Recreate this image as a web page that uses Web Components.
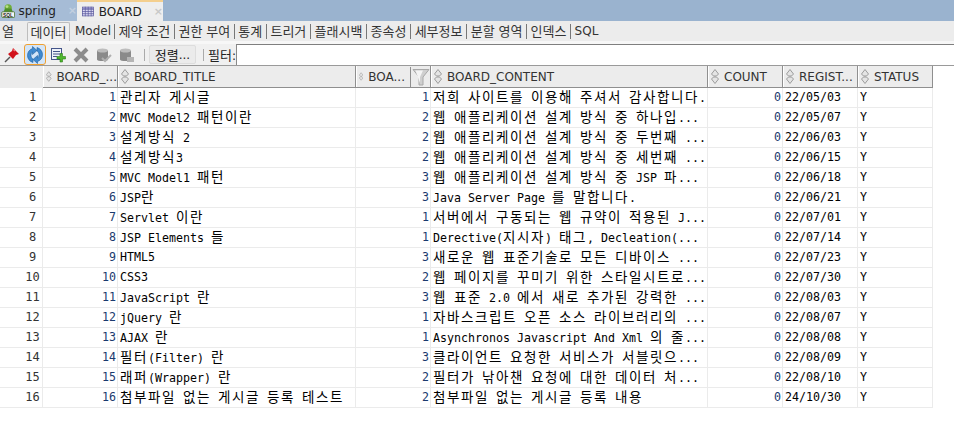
<!DOCTYPE html>
<html>
<head>
<meta charset="utf-8">
<style>
  html, body { margin: 0; padding: 0; background: #fff; }
  body { width: 954px; height: 422px; overflow: hidden; font-family: "Liberation Sans", "Noto Sans CJK KR", sans-serif; }
</style>
</head>
<body>
<editor-tabs></editor-tabs>
<sub-tabs></sub-tabs>
<data-toolbar></data-toolbar>
<data-grid></data-grid>

<script>
const UI_FONT = '"DejaVu Sans", "Noto Sans CJK KR", sans-serif';

// hangul runs get their own size, the CJK font is narrower than the original
function hangul(s) {
  return s.replace(/[\uac00-\ud7a3]+/g, m => `<span class="h">${m}</span>`);
}

class EditorTabs extends HTMLElement {
  connectedCallback() {
    this.attachShadow({ mode: 'open' });
    this.shadowRoot.innerHTML = `
      <style>
        :host { display: flex; height: 21px; background: #9ab3cf; font: 12px ${UI_FONT}; color: #222; }
        .tab { display: flex; align-items: center; height: 21px; box-sizing: border-box; }
        .spring { width: 77px; padding-left: 1px; background: #a6bcd6; }
        .spring svg { margin-right: 3px; }
        .board { width: 86px; padding-left: 5px; background: #eeeeee; border-top: 2px solid #f4cf8e; }
        .board svg { margin-right: 5px; }
        .x { color: #c3d0e0; font-size: 11px; font-weight: bold; margin-left: 12px; }
        .board .x { color: #c8c8c8; }
      </style>
      <div class="tab spring">
        <svg width="18" height="18" viewBox="0 0 18 18">
          <circle cx="9" cy="5" r="4.500" fill="#6fae3a"/>
          <circle cx="7.500" cy="3.500" r="1.800" fill="#b9e08c"/>
          <path d="M3 11 L5 6 H13 L15 11Z" fill="#4f8f2a"/>
          <rect x="1" y="10" width="16" height="7" rx="1" fill="#f7f7f7" stroke="#3c6b22"/>
          <text x="2.500" y="16" font-size="6" font-weight="bold" font-family="Liberation Sans" fill="#222">SQL</text>
        </svg>
        <span>spring</span><span class="x">×</span>
      </div>
      <div class="tab board">
        <svg width="16" height="13" viewBox="0 0 16 13">
          <rect x="0.500" y="0.500" width="15" height="12" fill="#dcd8f2" stroke="#5b5a9e"/>
          <rect x="1" y="1" width="14" height="2" fill="#8f8cc8"/>
          <path d="M0 3.500H16M0 6.500H16M0 9.500H16M4.500 0V13M8.500 0V13M12.500 0V13" stroke="#5b5a9e" stroke-width="1"/>
        </svg>
        <span>BOARD</span><span class="x">×</span>
      </div>
    `;
  }
}

class SubTabs extends HTMLElement {
  connectedCallback() {
    this.attachShadow({ mode: 'open' });
    const names = ['제약 조건', '권한 부여', '통계', '트리거', '플래시백', '종속성', '세부정보', '분할 영역', '인덱스', 'SQL'];
    this.shadowRoot.innerHTML = `
      <style>
        :host { display: flex; align-items: flex-end; height: 20px; background: #ececec; font: 12px ${UI_FONT}; color: #333; box-sizing: border-box; padding-left: 2px; }
        span.i { height: 19px; line-height: 19px; white-space: nowrap; }
        .h { font-size: 13px; }
        .col { width: 25px; }
        .on { width: 43px; box-sizing: border-box; text-align: center; border: 1px solid #bdbdbd; border-bottom: 0; border-radius: 2px 2px 0 0; background: #f0f0f0; margin-right: 5px; }
        span.t { padding: 0 3.600px; border-left: 1px solid #777; line-height: 15px; height: 15px; margin-bottom: 2px; }
        .m { padding-right: 3px; }
      </style>
      <span class="i col">${hangul('열')}</span><span class="i on">${hangul('데이터')}</span><span class="i m">Model</span>
      ${names.map(n => `<span class="i t">${hangul(n)}</span>`).join('')}
    `;
  }
}

class DataToolbar extends HTMLElement {
  connectedCallback() {
    this.attachShadow({ mode: 'open' });
    this.shadowRoot.innerHTML = `
      <style>
        :host { display: flex; align-items: center; height: 24px; background: #f0f0f0; font: 12px ${UI_FONT}; color: #222; box-sizing: border-box; border-top: 3px solid #f7f7f7; padding-left: 3px; }
        .h { font-size: 13px; }
        svg { flex: none; display: block; }
        .active { width: 22px; height: 21px; box-sizing: border-box; border: 1px solid #f0a030; border-radius: 3px; background: #d3e5f8; display: flex; align-items: center; justify-content: center; margin: 0 4px 0 4px; }
        .ic { margin-right: 7px; }
        .sep { width: 1px; height: 12px; background: #aaa; margin: 0 4px; flex: none; }
        .sep.b { margin: 0 4px 0 7px; }
        .sort { height: 19px; width: 47px; flex: none; display: flex; align-items: center; justify-content: center; background: #ebebeb; border: 1px solid #ddd; border-radius: 2px; box-sizing: border-box; }
        .label { margin-left: 0; white-space: nowrap; }
        input { flex: 1; min-width: 0; height: 21px; box-sizing: border-box; margin: 0; border: 0; border-top: 1px solid #7f7f7f; border-left: 1px solid #8a8a8a; background: #fff; outline: 0; }
      </style>
      <svg width="16" height="16" viewBox="0 0 16 16" style="margin-left:1px">
        <path d="M1 15 L6 10" stroke="#555" stroke-width="1.500"/>
        <path d="M9 1 L15 7 L12 8 L9 12 L4 7 L8 4Z" fill="#d1121b"/>
        <path d="M9.500 2.500 L11 4" stroke="#f08080" stroke-width="1.500"/>
      </svg>
      <div class="active">
        <svg width="18" height="18" viewBox="0 0 18 18" fill="#3f8ad0" stroke="#1f5fa0" stroke-width=".6">
          <path d="M7 16.500C3.500 15.500 1.500 12.500 1.500 9.500C1.500 6 3.500 3.500 6.500 2.500V.5L11 4.500L6.500 8.500V6C5.500 6.500 5 8 5 9.500C5 11 6 12.500 7 13Z"/>
          <path d="M11 1.500C14.500 2.500 16.500 5.500 16.500 8.500C16.500 12 14.500 14.500 11.500 15.500V17.500L7 13.500L11.500 9.500V12C12.500 11.500 13 10 13 8.500C13 7 12 5.500 11 5Z"/>
        </svg>
      </div>
      <svg class="ic" width="16" height="16" viewBox="0 0 16 16">
        <rect x="1.500" y="1.500" width="10" height="11" fill="#eef2fa" stroke="#44558a"/>
        <path d="M3 4.500H10M3 7H10M3 9.500H7" stroke="#44558a"/>
        <path d="M10 6.500V9.500H7V12H10V15H12.500V12H15.500V9.500H12.500V6.500Z" fill="#4fb82e" stroke="#2d7d17" stroke-width=".6"/>
      </svg>
      <svg class="ic" width="16" height="16" viewBox="0 0 16 16">
        <path d="M2 2L14 14M14 2L2 14" stroke="#8c8c8c" stroke-width="4"/>
      </svg>
      <svg class="ic" width="16" height="16" viewBox="0 0 16 16">
        <path d="M1 3.500V12.500C1 14.500 12 14.500 12 12.500V3.500Z" fill="#8a8a8a"/>
        <ellipse cx="6.500" cy="3.500" rx="5.500" ry="2" fill="#bdbdbd"/>
        <path d="M6 11L9 14L15 8" stroke="#b0b0b0" stroke-width="2" fill="none"/>
      </svg>
      <svg class="ic" width="16" height="16" viewBox="0 0 16 16" style="margin-right:5px">
        <path d="M1 3.500V12.500C1 14.500 12 14.500 12 12.500V3.500Z" fill="#8a8a8a"/>
        <ellipse cx="6.500" cy="3.500" rx="5.500" ry="2" fill="#bdbdbd"/>
        <path d="M8 10H15V15H8Z" fill="#b5b5b5"/>
      </svg>
      <div class="sep"></div>
      <div class="sort">${hangul('정렬')}...</div>
      <div class="sep b"></div>
      <span class="label">${hangul('필터')}:</span>
      <input>
    `;
  }
}

const ROWS = [
  [1, '관리자 게시글', 1, '저희 사이트를 이용해 주셔서 감사합니다.', 0, '22/05/03'],
  [2, 'MVC Model2 패턴이란', 2, '웹 애플리케이션 설계 방식 중 하나입...', 0, '22/05/07'],
  [3, '설계방식 2', 2, '웹 애플리케이션 설계 방식 중 두번째 ...', 0, '22/06/03'],
  [4, '설계방식3', 2, '웹 애플리케이션 설계 방식 중 세번째 ...', 0, '22/06/15'],
  [5, 'MVC Model1 패턴', 3, '웹 애플리케이션 설계 방식 중 JSP 파...', 0, '22/06/18'],
  [6, 'JSP란', 3, 'Java Server Page 를 말합니다.', 0, '22/06/21'],
  [7, 'Servlet 이란', 1, '서버에서 구동되는 웹 규약이 적용된 J...', 0, '22/07/01'],
  [8, 'JSP Elements 들', 1, 'Derective(지시자) 태그, Decleation(...', 0, '22/07/14'],
  [9, 'HTML5', 3, '새로운 웹 표준기술로 모든 디바이스 ...', 0, '22/07/23'],
  [10, 'CSS3', 2, '웹 페이지를 꾸미기 위한 스타일시트로...', 0, '22/07/30'],
  [11, 'JavaScript 란', 3, '웹 표준 2.0 에서 새로 추가된 강력한 ...', 0, '22/08/03'],
  [12, 'jQuery 란', 1, '자바스크립트 오픈 소스 라이브러리의 ...', 0, '22/08/07'],
  [13, 'AJAX 란', 1, 'Asynchronos Javascript And Xml 의 줄...', 0, '22/08/08'],
  [14, '필터(Filter) 란', 3, '클라이언트 요청한 서비스가 서블릿으...', 0, '22/08/09'],
  [15, '래퍼(Wrapper) 란', 2, '필터가 낚아챈 요청에 대한 데이터 처...', 0, '22/08/10'],
  [16, '첨부파일 없는 게시글 등록 테스트', 2, '첨부파일 없는 게시글 등록 내용', 0, '24/10/30'],
];

const COLS = [
  ['', 43], ['BOARD_...', 75], ['BOARD_TITLE', 238], ['BOA...', 75, true], ['BOARD_CONTENT', 277],
  ['COUNT', 75], ['REGIST...', 75], ['STATUS', 75],
];

const SORT_ICON = `<svg class="sorter" width="8" height="15" viewBox="0 0 8 15" fill="#e4e4e4" stroke="#9b9b9b">
  <path d="M4 .5L7.500 5 5.500 7H2.500L.5 5Z"/><path d="M4 14.500L7.500 10 5.500 8H2.500L.5 10Z"/></svg>`;
const FUNNEL = `<svg width="18" height="18" viewBox="0 0 18 18"><path d="M1 1.500H17L11 9V17H7V9Z" fill="#cfcfcf" stroke="#a8a8a8"/><path d="M3.500 2.500H11L8 9V15Z" fill="#f4f4f4"/></svg>`;

class DataGrid extends HTMLElement {
  connectedCallback() {
    this.attachShadow({ mode: 'open' });
    const tpl = COLS.map(c => c[1] + 'px').join(' ');
    const head = COLS.map((c, i) => {
      if (i === 0) return `<div class="hd corner"></div>`;
      return `<div class="hd${c[2] ? ' filt' : ''}">${SORT_ICON}<span>${c[0]}</span>${c[2] ? `<span class="funnel">${FUNNEL}</span>` : ''}</div>`;
    }).join('');
    const body = ROWS.map(r => `
      <div class="c rn">${r[0]}</div>
      <div class="c num">${r[0]}</div>
      <div class="c">${hangul(r[1])}</div>
      <div class="c num">${r[2]}</div>
      <div class="c">${hangul(r[3])}</div>
      <div class="c num">${r[4]}</div>
      <div class="c">${r[5]}</div>
      <div class="c">Y</div>`).join('');
    this.shadowRoot.innerHTML = `
      <style>
        :host { display: block; border-top: 1px solid #9a9a9a; background: #fff; }
        .g { display: grid; grid-template-columns: ${tpl}; grid-template-rows: 22px; grid-auto-rows: 20px; }
        .hd { display: flex; align-items: center; gap: 5px; box-sizing: border-box; padding: 0 0 0 3px; background: #ececec; border-right: 1px solid #8f8f8f; border-bottom: 1px solid #8f8f8f; box-shadow: inset 1px 0 #fff; font: 12px ${UI_FONT}; color: #333; white-space: nowrap; overflow: hidden; }
        .hd.corner { border-right: 0; border-bottom: 0; box-shadow: none; }
        .hd span { flex: none; }
        .hd.filt { padding-right: 0; }
        .funnel { margin-left: auto; width: 20px; height: 20px; border-left: 1px solid #8f8f8f; box-sizing: border-box; display: flex; justify-content: center; align-items: center; }
        .c { box-sizing: border-box; padding: 0 1px 0 2px; border-right: 1px solid #ebebeb; border-bottom: 1px solid #ebebeb; font: 11.630px/18px "DejaVu Sans Mono", "Noto Sans CJK KR", monospace; color: #000; white-space: nowrap; overflow: hidden; }
        .num { text-align: right; color: #1a3a6e; }
        .rn { font: 12px/18px "DejaVu Sans Mono", monospace; color: #333; padding-left: 23px; text-align: center; padding-right: 0; }
        .h { font-size: 13.500px; letter-spacing: 1.580px; }
      </style>
      <div class="g">${head}${body}</div>
    `;
  }
}

customElements.define('editor-tabs', EditorTabs);
customElements.define('sub-tabs', SubTabs);
customElements.define('data-toolbar', DataToolbar);
customElements.define('data-grid', DataGrid);
</script>
</body>
</html>
